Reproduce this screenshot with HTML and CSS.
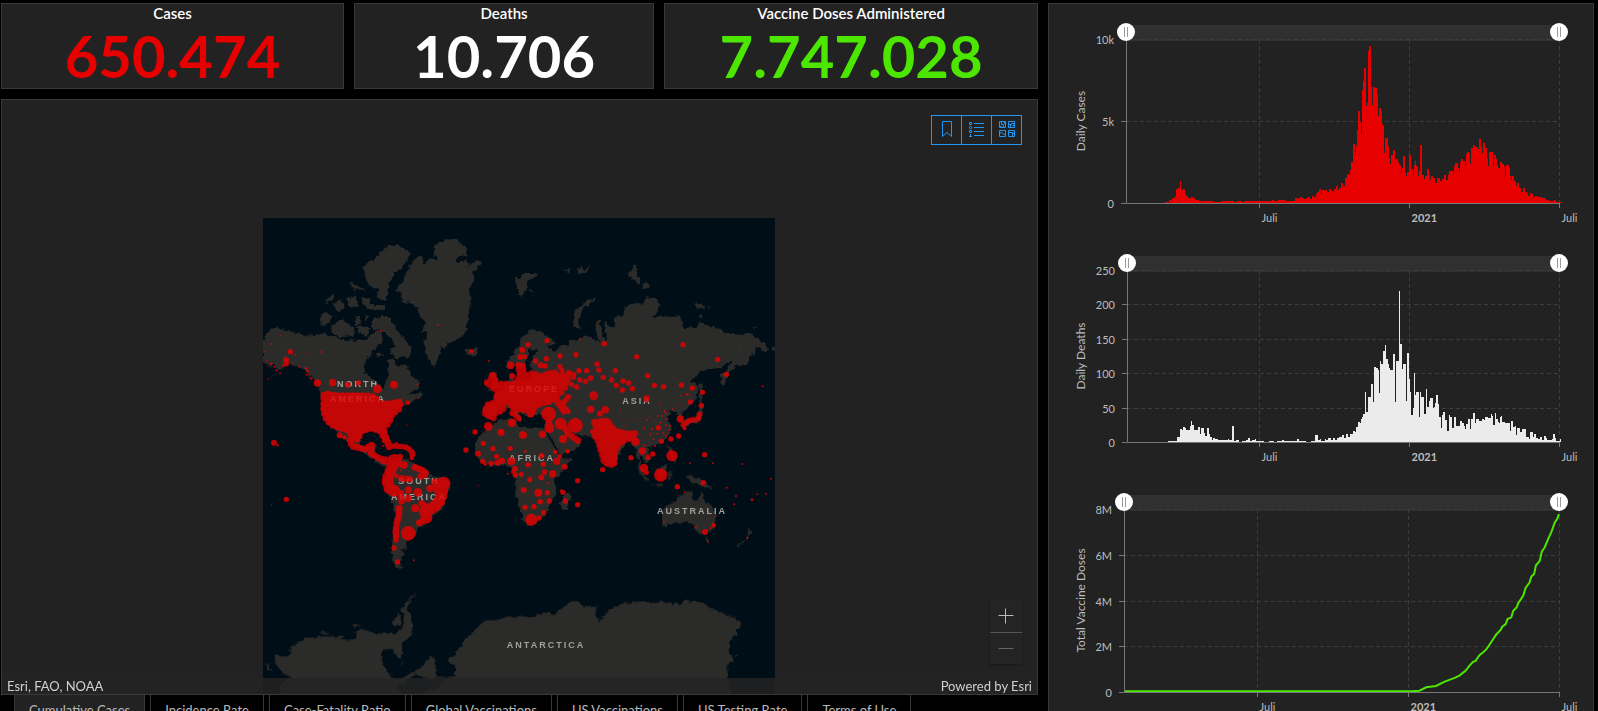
FILE: index.html
```html
<!DOCTYPE html>
<html lang="en">
<head>
    <meta charset="UTF-8">
    <meta name="viewport" content="width=device-width, initial-scale=1.0">
    <title>COVID-19 Dashboard</title>
    <link rel="stylesheet" href="styles.css">
</head>
<body>
<div class="dashboard">
    <main class="left">
        <div class="counters">
            <section class="panel counter counter-cases">
                <h2>Cases</h2>
                <p>650.474</p>
            </section>
            <section class="panel counter counter-deaths">
                <h2>Deaths</h2>
                <p>10.706</p>
            </section>
            <section class="panel counter counter-vaccine">
                <h2>Vaccine Doses Administered</h2>
                <p>7.747.028</p>
            </section>
        </div>

        <section class="panel map">
            <svg class="world" viewBox="0 0 512 476" role="img" aria-label="Cumulative cases map">
                <defs>
                    <filter id="coast" x="0" y="0" width="100%" height="100%" color-interpolation-filters="sRGB">
                        <feTurbulence type="fractalNoise" baseFrequency="0.2" numOctaves="2" seed="4"/>
                        <feDisplacementMap in="SourceGraphic" scale="6" xChannelSelector="R" yChannelSelector="G"/>
                    </filter>
                </defs>
                <rect class="sea" width="512" height="476"/>
                <g class="land" filter="url(#coast)">
                    <g transform="scale(.33333)">
                        <!-- North America and Greenland -->
                        <g transform="translate(-24 -24)">
                            <path d="M24 385L45 362L68 350L85 360L125 368L155 380L190 368L235 378L270 390L330 392L365 360L380 365L382 395L355 420L332 450L328 485L350 505L385 538L394 520L402 490L398 450L415 445L430 470L455 465L465 490L492 520L495 535L470 545L455 560L480 550L503 550L500 562L478 568L462 580L445 585L420 610L405 640L388 655L400 690L395 700L375 670L350 662L320 672L312 690L318 705L345 712L360 700L365 710L358 735L390 750L400 770L370 760L330 730L290 705L262 675L240 660L215 635L200 600L200 560L190 530L170 500L150 480L120 465L95 460L75 480L40 510L70 480L45 465L24 455Z"/>
                            <path d="M350 330L380 318L405 320L410 340L430 360L450 390L467 410L460 446L445 432L430 447L400 430L420 405L395 372L375 360L352 362Z"/>
                            <path d="M200 308L235 315L225 335L205 348L195 335ZM232 345L265 325L280 345L298 352L295 378L255 382L225 365ZM320 262L345 268L350 285L390 285L390 300L340 298L322 280Z"/>
                            <path d="M325 165L350 155L385 115L430 105L468 130L450 165L420 190L405 215L400 250L388 272L360 258L375 235L345 230L330 200Z"/>
                            <path d="M210 270L235 250L238 262L215 280ZM235 280L260 270L270 300L245 303ZM275 265L300 260L312 288L288 292ZM285 215L320 230L327 243L295 237ZM300 320L315 318L318 345L303 345ZM325 312L342 315L335 335ZM305 350L345 350L340 378L310 365ZM358 425L385 435L370 448Z"/>
                            <path d="M422 238L445 215L450 190L480 145L500 135L510 165L520 148L545 150L535 110L575 88L610 92L632 110L635 135L605 145L600 160L640 148L635 172L665 150L683 155L650 190L660 195L645 240L650 290L640 320L635 360L632 370L600 390L560 415L550 440L543 470L530 465L510 425L505 390L520 370L500 365L512 340L495 320L490 295L470 280L440 275L440 250Z"/>
                            <path d="M632 415L650 420L670 412L668 428L650 438L635 432Z"/>
                        </g>
                        <!-- Europe, Asia and Africa -->
                        <g transform="translate(711 -24)">
                            <path d="M20 460L28 445L55 410L65 380L100 358L125 365L165 395L168 410L140 402L160 425L180 410L205 402L210 390L240 388L260 375L300 398L285 365L288 335L302 325L305 370L318 400L315 335L345 355L345 320L375 315L370 295L400 280L430 280L440 262L470 265L480 285L470 310L450 320L510 320L545 320L552 355L590 350L600 335L640 350L680 370L725 375L745 368L775 385L803 412L795 425L770 410L760 430L740 465L705 468L688 490L672 530L662 520L665 495L690 465L695 450L660 475L600 480L575 515L597 530L590 560L570 590L555 600L545 610L555 640L540 640L530 605L505 600L510 615L500 625L515 660L490 695L465 705L440 712L455 745L440 760L425 735L417 745L432 790L420 775L410 740L405 710L380 690L345 760L325 770L305 730L290 690L270 680L240 678L200 660L225 690L245 700L230 715L180 735L165 700L140 660L135 640L145 622L110 612L95 622L60 608L60 635L40 600L0 590L-25 625L-48 620L-48 585L-15 580L-20 560L10 525L38 505L40 490L45 515L90 505L105 480L90 470L95 450L115 415L90 420L70 470L50 482L45 460L22 478Z"/>
                            <path d="M-35 545L-20 515L-30 490L-15 485L0 530ZM-75 715L-75 695L-35 650L5 625L40 628L60 648L80 655L130 655L145 680L165 715L180 745L215 742L200 765L165 810L165 860L140 905L105 945L80 948L70 930L50 865L48 810L35 775L15 765L-30 770L-60 755Z"/>
                            <path d="M205 845L212 855L200 900L185 902L183 875ZM290 262L245 300L235 330L237 357L220 347L228 300L262 272ZM45 203L58 205L75 188L110 190L105 205L80 210L84 230L65 265L50 235ZM85 240L95 235L97 252ZM387 190L405 165L412 190L422 220L405 218ZM425 225L440 215L447 230L430 242ZM583 280L612 285L610 298L588 295ZM622 288L635 295L630 300ZM598 318L610 322L600 325ZM756 355L773 348L770 357ZM190 180L212 178L207 190ZM228 178L245 168L250 180L272 170L268 180L240 192ZM598 520L608 525L608 560L600 585ZM813 415L825 408L825 425Z"/>
                            <path d="M548 655L555 632L590 620L602 575L612 590L600 635L565 645Z"/>
                        </g>
                        <!-- South America and Antarctica -->
                        <g transform="translate(-24 666)">
                            <path d="M405 60L430 56L460 58L480 72L510 85L530 108L565 115L588 130L570 180L560 210L530 230L510 250L490 260L480 285L450 310L456 320L440 332L448 342L440 352L430 370L448 383L425 385L410 350L412 300L425 220L400 165L385 120L400 90Z"/>
                            <path d="M60 640L78 650L105 645L108 618L150 595L200 590L260 590L275 602L300 600L302 572L340 568L360 580L420 580L445 560L450 530L438 510L455 485L485 455L460 490L455 510L465 520L472 560L472 582L440 612L445 640L435 654L425 650L410 628L380 635L385 680L410 712L435 720L460 700L480 695L500 680L525 650L540 655L535 675L548 690L540 705L575 712L600 708L600 682L578 663L600 640L630 600L660 570L690 540L735 540L755 530L835 530L880 515L895 525L920 505L950 482L970 482L980 497L1028 500L1023 530L1033 543L1065 510L1105 490L1165 483L1205 490L1215 483L1235 490L1280 490L1290 482L1335 485L1360 500L1395 515L1440 535L1460 550L1445 580L1425 600L1425 640L1437 660L1417 678L1417 714L1428 770L75 770L75 735L108 712L85 700L60 670Z"/>
                            <path d="M30 672L42 675L50 692L36 688ZM408 545L425 540L430 515L438 555L420 558ZM430 678L450 658L440 672ZM290 552L325 553L300 562ZM190 572L222 580L205 584ZM1440 640L1452 643L1447 648Z"/>
                            <path class="bay" d="M425 738L460 722L480 700L500 712L530 716L575 712L545 745L510 755L500 762L435 762Z"/>
                        </g>
                        <!-- Oceania -->
                        <g transform="translate(711 666)">
                            <path d="M488 208L515 190L540 165L560 153L578 155L575 175L595 182L603 148L615 180L640 205L650 230L640 265L615 285L600 280L585 262L565 246L530 250L490 258L485 235ZM615 293L629 295L622 307ZM740 265L757 282L742 295L718 323L710 320L735 300L745 285ZM555 105L590 112L615 125L638 147L600 135L575 128ZM405 78L430 95L450 125L435 118ZM453 130L490 135L487 140L455 134ZM505 95L520 100L510 106L517 122L505 118ZM500 10L515 25L530 70L515 60ZM465 90L500 72L500 100L480 120Z"/>
                        </g>
                    </g>
                </g>
                <g class="place">
                    <text x="95" y="169">NORTH</text>
                    <text x="95" y="184">AMERICA</text>
                    <text x="271" y="174">EUROPE</text>
                    <text x="374" y="186">ASIA</text>
                    <text x="269" y="243">AFRICA</text>
                    <text x="156" y="266">SOUTH</text>
                    <text x="156" y="282">AMERICA</text>
                    <text x="429" y="296">AUSTRALIA</text>
                    <text x="283" y="430">ANTARCTICA</text>
                </g>
                <g class="outbreak">
                    <g transform="scale(.33333)">
                        <g transform="translate(-24 -24)">
                            <path class="cluster" d="M206 555L212 550L240 556L330 556L360 560L372 578L400 582L438 574L432 598L412 612L402 640L385 655L392 678L400 700L408 710L395 700L375 662L345 655L320 664L308 690L290 680L282 662L240 650L215 632L205 605Z"/>
                            <path class="chain chain-m" d="M285 690L290 708L330 718L350 705L348 730L372 745L395 750L405 760L440 745"/>
                            <path class="chain chain-s" d="M420 708L450 710L468 720L475 745"/>
                        </g>
                        <g transform="translate(711 -24)">
                            <path class="cluster" d="M-35 520L-20 495L-10 525L10 520L40 525L60 500L55 465L68 465L70 500L95 490L130 500L140 490L165 488L178 500L205 495L200 520L185 530L170 560L150 575L125 580L105 590L95 615L80 600L65 600L50 590L45 605L30 580L5 570L10 600L-15 610L-20 625L-45 610L-40 585L-10 575L-10 545L0 535L-20 535Z"/>
                            <path class="chain chain-s" d="M38 608L60 628M70 478L60 495M175 575L200 600M205 560L185 585M160 560L195 610M550 645L570 630L595 628L600 608"/>
                            <path class="chain chain-m" d="M145 610L148 655M185 640L205 670L238 695"/>
                            <path class="cluster" d="M290 642L310 630L328 642L345 662L385 672L405 668L402 682L375 690L360 700L345 722L342 765L322 762L310 750L305 730L295 695L282 675Z"/>
                        </g>
                        <g transform="translate(-24 666)">
                            <path class="chain chain-l" d="M418 60L408 90L396 120L405 150L430 155M565 132L560 165L550 190L530 205L510 215L515 235"/>
                            <path class="chain chain-m" d="M400 65L430 72L448 75M480 82L505 92L515 102L495 110M438 160L440 185M433 205L432 225L425 250L422 275L424 298M440 115L470 118M540 125L545 160M500 190L520 210M493 248L510 240"/>
                        </g>
                    </g>
                    <g id="dots" transform="scale(.33333)"></g>
                </g>
            </svg>

            <div class="toolbar">
                <button type="button" aria-label="Bookmarks">
                    <svg width="18" height="18" viewBox="0 0 18 18"><path d="M4.5 1.5h9v15L9 12.500l-4.500 4z"/></svg>
                </button>
                <button type="button" aria-label="Legend">
                    <svg width="18" height="18" viewBox="0 0 18 18"><path d="M6 3.500h10M6 7.500h10M6 11.500h10M6 15.500h10M1.500 2.500h2v2h-2zM1.500 10.500h2v2h-2zM1 16.500h3M2.500 14v2"/><circle cx="2.500" cy="7.500" r="1.200"/></svg>
                </button>
                <button type="button" aria-label="Basemaps">
                    <svg width="18" height="18" viewBox="0 0 18 18"><path d="M1.500 1.500h6v6h-6zM10.500 1.500h6v6h-6zM1.500 10.500h6v6h-6zM10.500 10.500h6v6h-6zM3.500 1.500v3h2v3M1.500 6.500h2M6.500 2v2M10.500 4.500h3v-1h3M12.500 5v2M14.500 5.500h2M1.500 13.500l2-1l4 3M10.500 12.500h4v4M14.500 13.500h2"/></svg>
                </button>
            </div>

            <div class="zoom">
                <button type="button" aria-label="Zoom in">
                    <svg width="16" height="16" viewBox="0 0 16 16"><path d="M7.500 .5v15M.5 7.500h15"/></svg>
                </button>
                <button type="button" aria-label="Zoom out" disabled>
                    <svg width="16" height="16" viewBox="0 0 16 16"><path d="M.5 7.500h15"/></svg>
                </button>
            </div>

            <div class="attribution">
                <span>Esri, FAO, NOAA</span>
                <span>Powered by <a href="#">Esri</a></span>
            </div>
        </section>

        <nav class="tabs">
            <button type="button" class="active">Cumulative Cases</button>
            <button type="button">Incidence Rate</button>
            <button type="button">Case-Fatality Ratio</button>
            <button type="button">Global Vaccinations</button>
            <button type="button">US Vaccinations</button>
            <button type="button">US Testing Rate</button>
            <button type="button">Terms of Use</button>
        </nav>
    </main>

    <aside class="panel charts">
        <div class="chart chart-cases" id="cases"></div>
        <div class="chart chart-deaths" id="deaths"></div>
        <div class="chart chart-vaccine" id="vaccine"></div>
    </aside>
</div>
<script src="app.js"></script>
</body>
</html>
```

FILE: styles.css
```css
* { box-sizing: border-box; }

html { overflow: hidden; background: #000; }
body { margin: 0; font-family: Lato, "Open Sans", sans-serif; color: #fff; background: #000; }
button { font-family: inherit; cursor: pointer; }

.dashboard { display: grid; grid-template-columns: 1037fr 546fr; gap: 10px; padding: 3px 4px 0 1px; }
.panel { background: #222; border: 1px solid #393939; }
.left { display: flex; flex-direction: column; min-width: 0; }

/* counters */
.counters { display: flex; gap: 10px; margin-bottom: 10px; }
.counter { flex: 1 1 0; height: 86px; text-align: center; }
.counter-cases { flex-grow: 343; }
.counter-deaths { flex-grow: 300; }
.counter-vaccine { flex-grow: 374; }
.counter h2 { margin: 0; font-size: 15px; line-height: 18px; font-weight: 600; }
.counter p { margin: 0; font-size: 58px; line-height: 68px; font-weight: 700; }
.counter-cases p { color: #e60000; }
.counter-vaccine p { color: #4ce600; }

/* map */
.map { position: relative; flex: 1; display: flex; justify-content: center; align-items: flex-start; padding: 118px 1px 0 0; overflow: hidden; }
.world { display: block; width: 512px; max-width: 100%; }
.sea, .bay { fill: #000e18; }
.land { fill: #2b2b29; }
.place { fill: #a0a09e; font-family: "Liberation Sans", Arial, sans-serif; font-size: 9px; font-weight: 700; letter-spacing: 2px; text-anchor: middle; }
.outbreak { fill: #e60000; stroke: #e60000; opacity: 0.82; }
.outbreak circle { stroke: none; }
.cluster, .chain { stroke-linecap: round; stroke-linejoin: round; }
.cluster { stroke-width: 19; stroke-dasharray: 0 15; }
.chain { fill: none; }
.chain-s { stroke-width: 17; stroke-dasharray: 0 11; }
.chain-m { stroke-width: 20; stroke-dasharray: 0 12; }
.chain-l { stroke-width: 36; stroke-dasharray: 0 18; }

.toolbar { position: absolute; top: 15px; right: 15px; display: flex; border: 1px solid #2196f3; }
.toolbar button { width: 30px; height: 28px; padding: 0 0 2px; background: none; border: 0; border-left: 1px solid #2196f3; display: flex; align-items: center; justify-content: center; }
.toolbar button:first-child { width: 29px; border-left: 0; }
.toolbar svg { flex: none; fill: none; stroke: #2196f3; stroke-width: 1; }

.zoom { position: absolute; right: 15px; bottom: 30px; width: 32px; box-shadow: 0 1px 2px rgba(0, 0, 0, 0.3); }
.zoom button { display: flex; align-items: center; justify-content: center; width: 32px; height: 32px; padding: 0; background: #242424; border: 0; }
.zoom button + button { border-top: 1px solid #555; }
.zoom svg { fill: none; stroke: #bbb; }
.zoom button:disabled svg { stroke: #666; }

.attribution { position: absolute; left: 0; right: 0; bottom: 0; display: flex; justify-content: space-between; padding: 0 5px; font-size: 13px; line-height: 16px; color: #d0d0d0; background: rgba(36, 36, 36, 0.8); }
.attribution a { color: inherit; text-decoration: none; }

/* tabs */
.tabs { display: flex; gap: 5px; height: 30px; padding-left: 13px; }
.tabs button { padding: 0 14px; font-size: 13px; line-height: 28px; color: #bbb; background: #000; border: 1px solid #393939; border-top: 0; white-space: nowrap; }
.tabs .active { background: #222; }

/* charts */
.charts { min-width: 0; }
.chart { position: relative; }
.chart-cases { height: 231px; }
.chart-deaths { height: 239px; }
.chart-vaccine { height: 250px; }
.chart svg { display: block; width: 100%; height: 100%; }
.chart text { fill: #bdbdbd; font-size: 11px; }
.chart .title { font-size: 12px; text-anchor: middle; }
.chart .value { text-anchor: end; }
.chart .year { font-weight: 700; }
.grid { fill: none; stroke: #3c3c3c; stroke-dasharray: 4 3; }
.axis { fill: none; stroke: #777; }
.scroll { fill: #303030; }
.bars { shape-rendering: crispEdges; }
.line { fill: none; stroke: #4ce600; stroke-width: 2; }

.range { position: absolute; top: 19px; height: 18px; margin: 0; appearance: none; background: none; pointer-events: none; }
.range::-webkit-slider-thumb { appearance: none; width: 18px; height: 18px; border: 0; border-radius: 50%; pointer-events: auto; background: linear-gradient(90deg, transparent 7px, #999 7px, #999 8px, transparent 8px, transparent 10px, #999 10px, #999 11px, transparent 11px) 0 4px / 18px 10px no-repeat #fff; }
```

FILE: app.js
```js
const NS = 'http://www.w3.org/2000/svg';

function add(parent, tag, attrs, text) {
    const el = document.createElementNS(NS, tag);
    for (const key in attrs) el.setAttribute(key, attrs[key]);
    if (text !== undefined) el.textContent = text;
    parent.appendChild(el);
    return el;
}

// each series is a flat list: position, value, position, value...
const casesEarly = [87,1,117,4,129,10,138,16,147,22,150,42,156,46,162,66,166,38,171,42,177,26,180,20,186,14,195,18,201,14,207,8,219,5,261,4,285,6,324,3,333,5,345,2,355,5,399,7,420,5,426,7,438,10,446,6,456,8,474,10,482,7,507,15,516,11,519,14];
const casesLate = [0,18,6,16,12,13,18,16,24,18,30,13,36,21,42,18,48,28,52,34,57,42,63,26,66,40,81,34,87,42,93,37,99,32,104,42,108,52,114,38,118,46,123,60,132,50,136,66,138,76,144,88,150,84,153,98,156,122,162,178,168,140,171,170,174,220,177,277,183,244,186,208,189,340,192,366,195,406,201,292,204,300,207,457,210,472,216,348,219,295,222,349,228,345,232,325,237,260,240,286,246,275,249,238,252,230,255,150,258,196,267,170,270,136,273,118,276,145,282,160,288,130,291,133,297,123,300,115,306,90,309,105,312,142,318,90,321,80,324,94,330,145,336,102,340,82,343,115,346,127,350,112,357,82,360,95,363,175,369,85,375,72,378,82,384,103,390,83,393,70,396,82,402,76,407,60,414,76,423,66,428,73,434,85,440,70,446,85,450,97,456,95,462,90,465,110,468,120,477,105,480,94,483,122,486,133,492,125,496,110,499,122,501,148,504,154,510,150,513,118,516,166,522,175,528,168,537,163,540,193,546,172,549,150,552,181,558,165,564,135,567,110,570,154,582,110,585,145,591,132,594,115,597,106,603,124,609,118,615,112,618,82,621,115,629,105,633,82,636,70,639,82,645,66,650,52,655,60,661,45,666,33,672,46,678,34,684,30,687,22,693,30,699,27,703,18,708,22,714,17,720,18,730,14,740,10,750,7,765,10,771,4,787,0];
const cases = casesEarly.concat(casesLate.map((n, i) => i % 2 ? n : n + 522));

const deaths = [300,1,342,4,348,2,354,4,368,16,376,40,382,36,386,46,391,42,394,37,405,48,408,64,412,52,416,37,430,44,433,25,437,43,445,26,449,17,454,43,459,24,463,16,469,5,472,13,477,10,485,7,495,5,502,7,507,5,513,10,518,5,525,49,530,2,536,5,547,1,553,4,565,7,571,13,576,4,583,7,590,10,595,4,605,2,612,4,617,1,632,4,645,1,655,4,668,7,675,2,685,4,710,8,717,2,725,4,737,1,752,4,758,2,764,22,770,5,776,10,781,4,790,10,795,5,800,13,808,5,815,13,820,7,825,13,832,16,840,22,846,13,850,25,856,16,862,25,870,34,876,30,881,46,885,61,891,57,895,70,898,75,901,85,904,151,909,91,915,136,921,175,929,121,932,226,938,222,942,216,944,148,948,243,952,235,956,273,961,291,966,250,970,235,974,222,978,217,984,222,986,262,992,121,995,243,1001,451,1006,294,1012,218,1015,234,1021,124,1026,265,1031,188,1035,150,1038,82,1042,103,1044,207,1048,142,1052,150,1058,76,1061,150,1066,136,1075,85,1078,159,1083,106,1087,124,1092,133,1098,103,1102,106,1106,118,1109,142,1114,115,1117,76,1123,43,1126,82,1129,91,1135,67,1140,34,1144,82,1149,76,1155,43,1158,76,1166,49,1176,64,1181,58,1187,49,1190,40,1194,53,1198,70,1204,40,1208,70,1214,88,1219,58,1223,68,1230,64,1240,70,1246,67,1249,76,1255,73,1264,85,1268,79,1272,52,1275,88,1280,70,1284,61,1287,58,1290,76,1293,79,1297,61,1304,37,1306,58,1320,34,1323,64,1329,46,1332,49,1337,22,1340,43,1347,31,1354,40,1366,16,1372,10,1375,31,1386,16,1388,25,1393,13,1400,10,1405,16,1411,7,1417,19,1422,13,1426,7,1434,5,1438,10,1443,25,1447,13,1450,4,1458,3,1461,10,1465,0].map((n, i) => i % 2 ? n : n - 226);

const vaccine = [0,2,820,2,843,4,862,14,890,18,915,31,945,43,957,49,975,64,985,78,996,90,1003,93,1014,110,1024,118,1034,128,1045,145,1062,172,1075,186,1079,195,1089,203,1094,218,1105,223,1110,242,1120,253,1125,266,1134,280,1139,288,1146,312,1157,327,1162,345,1170,353,1175,378,1186,392,1192,420,1200,432,1209,455,1220,480,1229,507,1236,518,1241,532];

const charts = [
    { id: 'cases', title: 'Daily Cases', left: 77, span: 1302, max: 492, color: '#e60000', data: cases, labels: ['0', '5k', '10k'], juli: 0.307, year: 0.653 },
    { id: 'deaths', title: 'Daily Deaths', left: 78, span: 1233, max: 515, color: '#ebebeb', data: deaths, labels: ['0', '50', '100', '150', '200', '250'], juli: 0.305, year: 0.652 },
    { id: 'vaccine', title: 'Total Vaccine Doses', left: 75, span: 1241, max: 547, data: vaccine, line: true, labels: ['0', '2M', '4M', '6M', '8M'], juli: 0.306, year: 0.653 }
];

function drawChart(c) {
    const box = document.getElementById(c.id);
    const w = box.clientWidth;
    const h = box.clientHeight;
    const top = 35, right = w - 34, bottom = h - 32;
    const pw = right - c.left, ph = bottom - top;
    const X = n => c.left + n / c.span * pw;
    const Y = n => bottom - n / c.max * ph;
    box.innerHTML = '';
    const svg = add(box, 'svg', { role: 'img', 'aria-label': c.title });

    add(svg, 'rect', { class: 'scroll', x: c.left, y: top - 14, width: pw, height: 16 });

    c.labels.forEach((label, i) => {
        const y = Math.round(bottom - ph * i / (c.labels.length - 1)) + 0.5;
        if (i) add(svg, 'path', { class: 'grid', d: `M${c.left} ${y}H${right}` });
        add(svg, 'path', { class: 'axis', d: `M${c.left - 5} ${y}H${c.left}` });
        add(svg, 'text', { class: 'value', x: c.left - 12, y: y + 4 }, label);
    });

    [[c.juli, 'Juli'], [c.year, '2021'], [1, 'Juli']].forEach(([at, label]) => {
        const x = Math.round(c.left + pw * at) + 0.5;
        add(svg, 'path', { class: 'grid', d: `M${x} ${top}V${bottom}` });
        add(svg, 'path', { class: 'axis', d: `M${x} ${bottom}v5` });
        add(svg, 'text', { class: label === '2021' ? 'year' : 'month', x: x + 2, y: bottom + 19 }, label);
    });

    if (c.line) {
        let d = '';
        for (let i = 0; i < c.data.length; i += 2) d += (i ? 'L' : 'M') + X(c.data[i]) + ' ' + Y(c.data[i + 1]);
        add(svg, 'path', { class: 'line', d });
    } else {
        let d = `M${X(c.data[0])} ${bottom}`;
        for (let i = 0; i < c.data.length; i += 2) d += `H${X(c.data[i])}V${Y(c.data[i + 1])}`;
        add(svg, 'path', { class: 'bars', fill: c.color, d: d + 'Z' });
    }

    add(svg, 'path', { class: 'axis', d: `M${c.left + 0.5} ${top}V${bottom + 0.5}H${right}` });

    const mid = top + ph / 2;
    add(svg, 'text', { class: 'title', x: 36, y: mid, transform: `rotate(-90 36 ${mid})` }, c.title);

    [['start', 0], ['end', 100]].forEach(([name, value]) => {
        const input = document.createElement('input');
        input.type = 'range';
        input.className = 'range';
        input.value = value;
        input.setAttribute('aria-label', `${c.title} ${name}`);
        input.style.left = c.left - 9 + 'px';
        input.style.width = pw + 18 + 'px';
        box.appendChild(input);
    });
}

function drawCharts() {
    charts.forEach(drawChart);
}

// dots: x, y, radius
const dotGroups = [
    { dx: -24, dy: -24, dots: [106,425,8, 93,450,9, 94,461,8, 187,519,11, 233,518,11, 278,524,9, 310,519,8, 367,537,13, 417,524,12, 459,578,7, 57,698,9, 68,706,4, 49,462,4, 57,470,3, 64,481,3, 75,489,3, 40,507,2, 32,425,2, 49,402,3, 76,376,2, 85,418,2, 91,436,2, 121,434,3, 114,457,2, 155,431,2, 198,426,3, 133,470,3, 153,475,4, 158,484,4, 155,494,3, 163,494,3, 165,503,3, 170,507,3, 85,468,4, 35,451,2, 37,466,2, 376,363,3, 549,345,3, 487,524,3, 491,565,2, 455,645,2, 650,424,7, 702,453,3, 767,466,11, 660,666,8, 633,720,8, 700,649,13, 738,667,11, 771,638,12, 685,700,8, 714,716,8, 766,715,7, 803,675,11, 669,731,9, 725,739,8, 697,518,10, 712,498,11, 705,605,22, 802,420,9, 795,441,8, 254,676,9, 268,682,7, 384,708,3, 425,698,3, 402,712,9] },
    { dx: 711, dy: -24, dots: [84,404,8, 141,392,8, 67,420,8, 60,441,8, 73,440,8, 106,453,8, 139,446,8, 122,466,9, 135,468,8, 32,466,11, 36,498,9, 180,438,8, 228,434,8, 240,388,3, 313,401,8, 180,470,8, 186,482,8, 207,487,8, 221,493,8, 220,502,8, 237,482,8, 260,482,8, 291,462,8, 297,480,8, 346,482,8, 240,510,8, 257,514,8, 272,504,8, 310,502,8, 335,510,8, 349,526,8, 369,513,8, 386,519,8, 367,540,8, 397,536,8, 443,497,8, 463,526,8, 491,530,8, 410,440,8, 549,404,8, 653,448,8, 679,493,8, 544,525,8, 577,534,8, 608,547,8, 571,576,8, 604,586,8, 541,627,11, 536,678,8, 513,687,8, 484,694,8, 475,653,8, 440,566,10, 281,557,13, 272,598,11, 316,599,11, 300,611,9, 285,637,11, 146,612,22, 182,641,18, 226,646,22, 148,655,15, 189,687,12, 127,673,11, 70,675,11, 36,638,12, 214,523,8, 230,531,8, 195,534,8, 185,548,8, 204,604,8, 36,610,8, 92,612,10, 58,628,7, 31,716,7, 76,725,4, 125,737,8, 166,726,7, 203,724,7, 277,665,7, 407,695,12, 427,723,11, 458,732,8, 444,742,8, 393,743,8, 516,737,17, 614,734,8, 554,655,6, 719,413,2, 788,529,3, 360,600,2, 405,629,2, 441,629,3, 450,620,2, 461,631,2, 473,618,3, 486,618,3, 493,604,3, 497,610,3, 482,582,2, 519,598,3, 535,585,2, 541,558,2, 562,553,4, 434,655,3, 456,657,3, 451,673,3, 473,671,3, 460,687,3, 490,669,3, 499,677,3, 508,661,3, 510,648,3, 498,646,3, 482,638,3, 502,627,3, 372,648,2, 465,708,3, 433,705,3, 305,640,15, 318,640,17] },
    { dx: -24, dy: 666, dots: [94,178,8, 50,195,2, 460,280,22, 417,324,8, 428,366,8, 476,361,3, 431,206,8, 423,300,8, 489,157,13, 525,145,11, 460,150,11, 460,175,11, 481,205,12, 447,75,11, 396,120,15, 566,130,20, 435,50,9, 410,55,10, 438,91,3, 425,108,7, 385,65,8, 423,16,8, 450,22,6, 475,40,7, 470,55,6, 683,64,8, 691,73,5, 708,70,8, 727,68,9, 741,62,8, 769,64,12, 670,136,2, 759,101,3, 780,86,8, 805,150,8] },
    { dx: 711, dy: 666, dots: [5,63,10, 33,64,11, 45,86,8, 40,96,7, 46,105,8, 64,103,8, 85,74,8, 130,73,8, 124,47,8, 134,96,8, 124,112,9, 158,102,11, 89,119,8, 145,129,3, 72,150,8, 115,158,12, 142,158,8, 121,185,8, 148,183,8, 75,202,8, 102,200,8, 131,218,8, 94,239,18, 117,234,8, 170,64,11, 179,49,7, 194,80,9, 233,122,8, 233,194,8, 189,157,8, 183,152,4, 196,183,8, 308,89,8, 323,60,18, 343,70,9, 432,84,13, 439,97,8, 482,105,20, 532,140,8, 610,128,8, 554,156,3, 25,101,2, 491,246,3, 588,261,3, 615,276,9, 641,256,7, 632,264,3, 624,305,3, 648,225,2, 742,293,3, 570,69,3, 639,70,3, 727,72,3, 813,116,3, 680,143,3, 708,168,3, 703,193,3, 756,179,4, 772,163,3, 798,161,3] }
];

const dots = document.getElementById('dots');
dotGroups.forEach(group => {
    for (let i = 0; i < group.dots.length; i += 3) {
        add(dots, 'circle', { cx: group.dots[i] + group.dx, cy: group.dots[i + 1] + group.dy, r: group.dots[i + 2] });
    }
});

drawCharts();
window.addEventListener('resize', drawCharts);
```
